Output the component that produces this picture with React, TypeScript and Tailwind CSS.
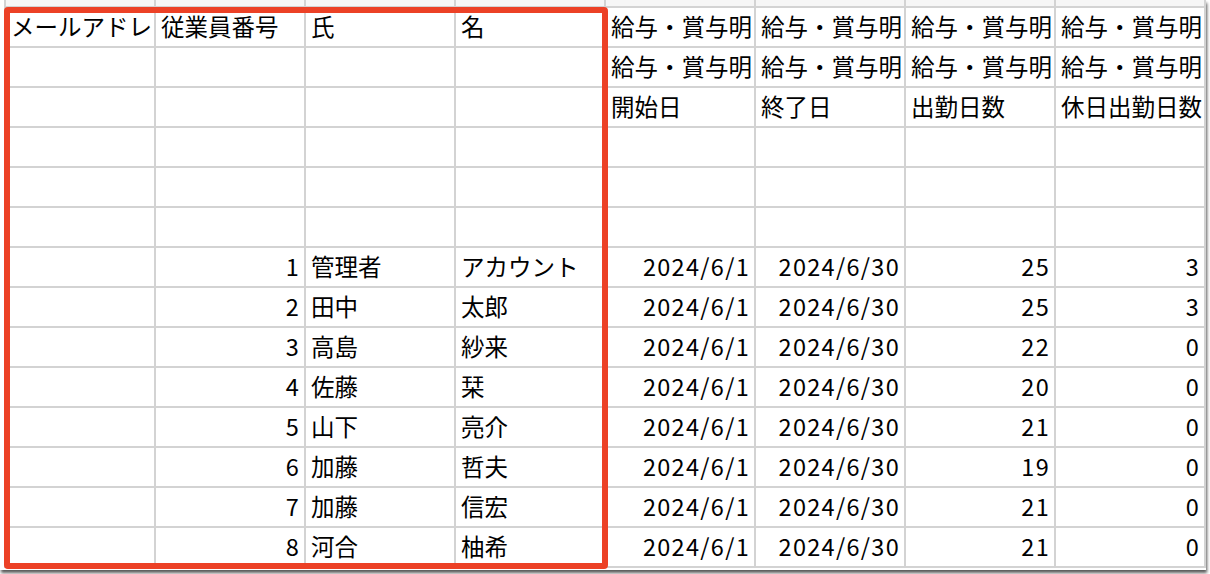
const blank = ["", "", "", "", "", "", "", ""];

const head: string[][] = [
  ["メールアドレ", "従業員番号", "氏", "名", "給与・賞与明", "給与・賞与明", "給与・賞与明", "給与・賞与明"],
  ["", "", "", "", "給与・賞与明", "給与・賞与明", "給与・賞与明", "給与・賞与明"],
  ["", "", "", "", "開始日", "終了日", "出勤日数", "休日出勤日数"],
  blank,
  blank,
  blank,
];

const staff = [
  { no: 1, sei: "管理者", mei: "アカウント", days: 25, holiday: 3 },
  { no: 2, sei: "田中", mei: "太郎", days: 25, holiday: 3 },
  { no: 3, sei: "高島", mei: "紗来", days: 22, holiday: 0 },
  { no: 4, sei: "佐藤", mei: "栞", days: 20, holiday: 0 },
  { no: 5, sei: "山下", mei: "亮介", days: 21, holiday: 0 },
  { no: 6, sei: "加藤", mei: "哲夫", days: 19, holiday: 0 },
  { no: 7, sei: "加藤", mei: "信宏", days: 21, holiday: 0 },
  { no: 8, sei: "河合", mei: "柚希", days: 21, holiday: 0 },
];

// which columns are numbers (right aligned) in data rows
const numericCols = [1, 4, 5, 6, 7];

function Cell({ text, right }: { text: string; right?: boolean }) {
  return (
    <div
      className={
        "bg-white h-[38px] flex items-center overflow-hidden whitespace-nowrap " +
        (right ? "justify-end pr-[4px] tracking-[1.3px]" : "pl-[5px]")
      }
    >
      {text}
    </div>
  );
}

export default function App() {
  const rows: { cells: string[]; data: boolean }[] = [
    ...head.map((cells) => ({ cells, data: false })),
    ...staff.map((s) => ({
      cells: ["", String(s.no), s.sei, s.mei, "2024/6/1", "2024/6/30", String(s.days), String(s.holiday)],
      data: true,
    })),
  ];

  return (
    <div className="w-[1210px] h-[574px] bg-white overflow-hidden">
      <div
        className="relative w-[1206px] h-[570px] bg-white overflow-hidden shadow-[1px_3px_3px_rgba(0,0,0,0.65)] text-black text-[23.5px] leading-none"
        style={{ fontFamily: '"Noto Sans CJK JP", "Noto Sans", sans-serif' }}
      >
        <div className="ml-[4px] w-[1202px] bg-[#d3d3d3] grid grid-cols-[repeat(8,148px)] gap-[2px] px-[2px] pb-[2px]">
          {blank.map((_, i) => (
            <div key={"top" + i} className="bg-[#f6f6f6] h-[6px]" />
          ))}
          {rows.map((r, ri) =>
            r.cells.map((c, ci) => (
              <Cell key={ri + "-" + ci} text={c} right={r.data && numericCols.includes(ci)} />
            ))
          )}
        </div>

        {/* red highlight frame around the first four columns */}
        <div className="absolute left-[4px] top-[7px] w-[604px] h-[562px] border-[6px] border-[#ec4126] rounded-[4px]" />
      </div>
    </div>
  );
}
